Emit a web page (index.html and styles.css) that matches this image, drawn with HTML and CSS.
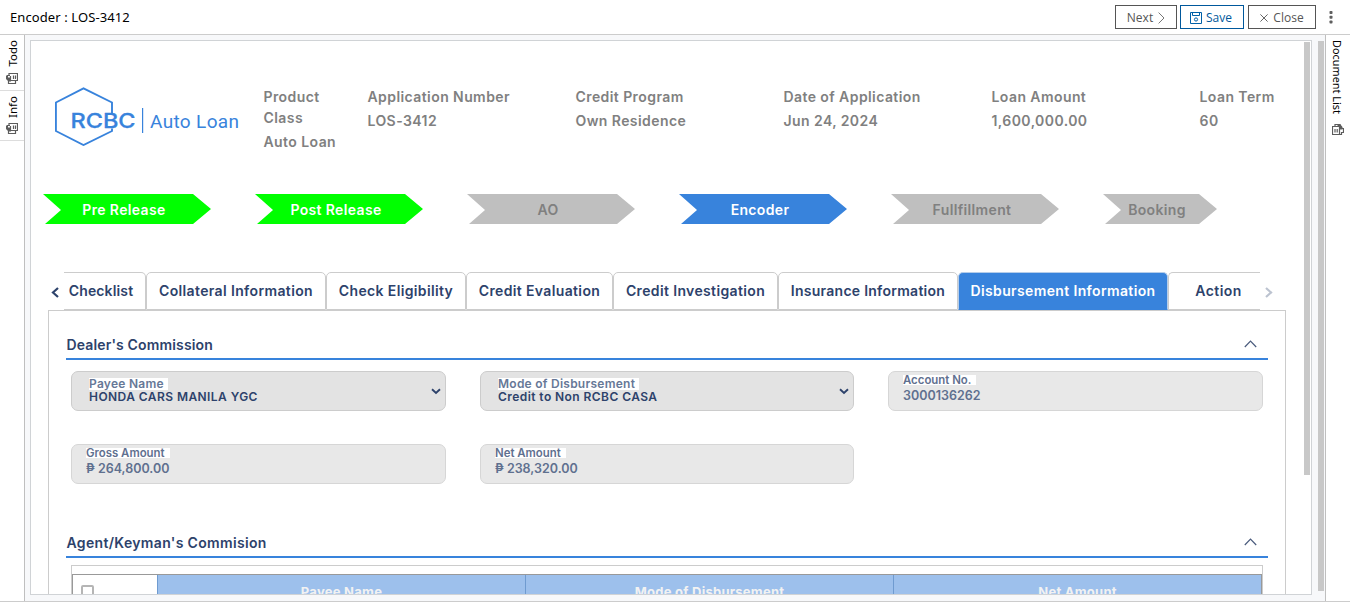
FILE: index.html
```html
<!DOCTYPE html>
<html lang="en">
<head>
<meta charset="utf-8">
<title>Encoder : LOS-3412</title>
<link rel="stylesheet" href="styles.css">
</head>
<body>
<svg class="defs" width="0" height="0">
  <symbol id="docs" viewBox="0 0 12 11"><path d="M4.500 7.500V3M3 2.500V.500H11.500V7.500H10M4 2.500H1M4.500 7.500H9.500V10.500H2.500V8M7.500 2.500V6M9.500 2.500V6" fill="none" stroke="#5c5c5c" stroke-width="1.200"/><path d="M0 2.500H2V4.500H5V8.500H2.500L0 6Z" fill="#5c5c5c"/></symbol>
  <symbol id="up" viewBox="0 0 13 8"><path d="M.8 7L6.500 1L12.200 7" fill="none" stroke="#4a5b7d" stroke-width="1.200"/></symbol>
  <symbol id="down" viewBox="0 0 10 7"><path d="M1 1.300L5 5L9 1.300" fill="none" stroke="#2d426b" stroke-width="1.900"/></symbol>
</svg>
<header class="topbar">
  <h1 class="title">Encoder : LOS-3412</h1>
  <div class="actions">
    <button class="btn next">Next <svg width="7" height="12" viewBox="0 0 7 12"><path d="M.6 .6L6 6L.6 11.400" fill="none" stroke="#666" stroke-width=".9"/></svg></button>
    <button class="btn save"><svg width="12" height="12" viewBox="0 0 12 12"><g fill="none" stroke="#0060a8"><path d="M.5 .5H11.500V11.500H.5Z"/><path d="M2.500 .5V3.500H9.500V.5"/><circle cx="6" cy="7.500" r="1.600"/></g></svg>Save</button>
    <button class="btn close"><svg width="8" height="8" viewBox="0 0 8 8"><path d="M.4 .4L7.600 7.600M7.600 .4L.4 7.600" stroke="#555" stroke-width=".9"/></svg>Close</button>
    <svg class="more" width="4" height="13" viewBox="0 0 4 13" fill="#5f5f5f"><rect x=".5" y="0" width="3" height="3" rx=".8"/><rect x=".5" y="4.700" width="3" height="3" rx=".8"/><rect x=".5" y="9.500" width="3" height="3" rx=".8"/></svg>
  </div>
</header>
<div class="workspace">
  <nav class="rail left">
    <div class="railitem todo"><span>Todo</span><svg width="12" height="11"><use href="#docs"/></svg></div>
    <div class="railitem info"><span>Info</span><svg width="12" height="11"><use href="#docs"/></svg></div>
  </nav>
  <main class="stage">
    <div class="panel">
      <div class="content">
        <section class="summary">
          <svg class="logo" width="185" height="60" viewBox="0 0 185 60">
            <path d="M57 27V16.500L28.500 2.300L.9 16.500V45L28.500 59L57 45V42.500" fill="none" stroke="#3883dc" stroke-width="1.900"/>
            <g fill="#3883dc"><text class="brand" x="15.500" y="42" textLength="65" lengthAdjust="spacingAndGlyphs">RCBC</text>
            <rect x="87" y="22" width="1.200" height="25"/>
            <text class="product" x="95" y="42" textLength="89">Auto Loan</text></g>
          </svg>
          <dl><dt class="narrow">Product Class</dt><dd>Auto Loan</dd></dl>
          <dl><dt>Application Number</dt><dd>LOS-3412</dd></dl>
          <dl><dt>Credit Program</dt><dd>Own Residence</dd></dl>
          <dl><dt>Date of Application</dt><dd>Jun 24, 2024</dd></dl>
          <dl><dt>Loan Amount</dt><dd>1,600,000.00</dd></dl>
          <dl><dt>Loan Term</dt><dd>60</dd></dl>
        </section>
        <ol class="steps">
          <li class="done">Pre Release</li>
          <li class="done">Post Release</li>
          <li>AO</li>
          <li class="current">Encoder</li>
          <li>Fullfillment</li>
          <li class="last">Booking</li>
        </ol>
        <div class="tabrow">
          <svg class="prev" width="8" height="11" viewBox="0 0 8 11"><path d="M7 1L2 5.500L7 10" fill="none" stroke="#2d426b" stroke-width="2.200"/></svg>
          <div class="tabs">
            <div class="tab t1">Checklist</div><div class="tab t2">Collateral Information</div><div class="tab t3">Check Eligibility</div><div class="tab t4">Credit Evaluation</div><div class="tab t5">Credit Investigation</div><div class="tab t6">Insurance Information</div><div class="tab t7 selected">Disbursement Information</div><div class="tab t8">Action</div>
          </div>
          <svg class="following" width="8" height="11" viewBox="0 0 8 11"><path d="M1 1L6 5.500L1 10" fill="none" stroke="#bcc3d0" stroke-width="2.200"/></svg>
        </div>
        <div class="tabbody">
          <h2 class="heading"><span>Dealer's Commission</span><svg width="13" height="8"><use href="#up"/></svg></h2>
          <div class="fields">
            <div class="field select"><label>Payee Name</label><span class="value">HONDA CARS MANILA YGC</span><svg class="caret" width="10" height="7"><use href="#down"/></svg></div>
            <div class="field select"><label>Mode of Disbursement</label><span class="value">Credit to Non RCBC CASA</span><svg class="caret" width="10" height="7"><use href="#down"/></svg></div>
            <div class="field"><label>Account No.</label><span class="value">3000136262</span></div>
            <div class="field"><label>Gross Amount</label><span class="value">₱ 264,800.00</span></div>
            <div class="field"><label>Net Amount</label><span class="value">₱ 238,320.00</span></div>
          </div>
          <h2 class="heading second"><span>Agent/Keyman's Commision</span><svg width="13" height="8"><use href="#up"/></svg></h2>
          <div class="tablewrap"><div class="thead">
            <div class="check"><i></i></div><div class="th">Payee Name</div><div class="th mode">Mode of Disbursement</div><div class="th">Net Amount</div>
          </div></div>
        </div>
      </div>
      <div class="scroll inner"></div>
    </div>
    <div class="scroll outer"></div>
  </main>
  <aside class="rail right"><span>Document List</span><svg width="12" height="11" viewBox="0 0 12 11"><path d="M.5 2.500H7.500V10.500H.5ZM3 2V.5H8V2M8 10.500H9.500V8.500H11.500V4.500H10M3 5V8.500M5.200 5V8.500" fill="none" stroke="#5c5c5c" stroke-width="1.200"/><path d="M5.500 .5H8.500L10.500 3V5.500H7.500V3H5.500Z" fill="#5c5c5c"/></svg></aside>
</div>
</body>
</html>
```
FILE: styles.css
```css
* { box-sizing: border-box; }
body { margin: 0; width: 1350px; height: 602px; overflow: hidden; background: #fff; font-family: Inter, sans-serif; font-size: 14px; }
h1, h2, dl, dt, dd, ol { margin: 0; padding: 0; }
svg { display: block; flex: none; }
.defs { position: absolute; }
.topbar { height: 35px; display: flex; justify-content: space-between; align-items: center; border-bottom: 1px solid #ccc; padding: 0 17px 0 10px; }
.title { font: 400 13px "Noto Sans", sans-serif; color: #000; letter-spacing: .1px; }
.actions { display: flex; align-items: center; }
.btn { height: 24px; padding: 1px 0 0; margin: 0 3px 0 0; display: flex; align-items: center; justify-content: center; background: #fff; border: 1px solid #555; color: #555; font: 12px "Open Sans", sans-serif; gap: 5px; }
.next { width: 62px; }
.save { width: 64px; border-color: #00589c; color: #00589c; gap: 4px; margin-right: 4px; padding-right: 2px; }
.close { width: 68px; gap: 5px; margin-right: 13px; }
.workspace { height: 567px; display: flex; border-bottom: 1px solid #ccc; }
.rail { width: 25px; flex: none; font: 11.500px "Noto Sans", sans-serif; color: #000; }
.left { border-right: 1px solid #bfbfbf; }
.railitem { display: flex; flex-direction: column; align-items: center; border-bottom: 1px solid #ddd; }
.railitem span { writing-mode: vertical-rl; transform: rotate(180deg); line-height: 16px; margin-left: 2px; }
.todo { height: 56px; padding-top: 5px; gap: 6px; }
.info { height: 50px; padding-top: 5px; gap: 5px; }
.right { border-left: 1px solid #bfbfbf; padding-top: 5px; display: flex; flex-direction: column; align-items: center; gap: 10px; font-size: 10.900px; }
.right span { writing-mode: vertical-rl; line-height: 16px; margin-right: 3px; }
.stage { width: 1300px; flex: none; display: flex; background: #f7f8fa; padding: 5px 0 0 5px; }
.panel { width: 1282px; height: 555px; flex: none; display: flex; border: 1px solid #d0d3d6; background: #fff; overflow: hidden; }
.content { width: 1273px; flex: none; }
.scroll { width: 6px; background: #c8c8c8; flex: none; }
.inner { height: 433px; margin-top: 1px; }
.outer { height: 550px; margin: 1px 0 0 6px; }
.summary { height: 153px; padding: 45px 0 0 24px; display: grid; grid-template-columns: 208.500px 104px 208px 208px 208px 208px 80px; color: #808080; font-weight: 600; font-size: 14px; line-height: 21px; letter-spacing: .42px; }
.brand { font: 500 20px Inter, sans-serif; letter-spacing: 0; stroke: #3883dc; stroke-width: .3px; }
.product { font: 400 19px Roboto, sans-serif; letter-spacing: 0; }
.summary dd { margin-top: 3px; }
.narrow { width: 80px; }
.steps { list-style: none; display: flex; gap: 44px; padding-left: 12px; height: 30px; }
.steps li { width: 168px; padding-right: 6px; line-height: 32px; text-align: center; font-weight: 600; letter-spacing: .35px; color: #808080; background: #bfbfbf; clip-path: polygon(0 0, calc(100% - 18px) 0, 100% 15px, calc(100% - 18px) 100%, 2px 100%, 18px 16px); }
.steps .done { background: #0f0; color: #fff; }
.steps .current { background: #3883dc; color: #fff; }
.steps .last { width: 114px; }
.tabrow { margin-top: 48px; height: 38px; display: flex; padding-left: 19px; align-items: flex-start; }
.prev { margin: 15px 7px 0 1px; }
.following { margin: 15px 0 0 5px; }
.tabs { width: 1196px; height: 38px; display: flex; overflow: hidden; flex: none; margin-left: -2px; }
.tab { flex: none; border: 1px solid #ccc; border-radius: 5px 5px 0 0; color: #2d426b; text-align: center; line-height: 36px; font-weight: 600; letter-spacing: .36px; white-space: nowrap; }
.t1 { width: 82px; border-left: 0; border-top-left-radius: 0; padding-right: 7px; letter-spacing: .15px; }
.t2 { width: 180px; }
.t3 { width: 140px; }
.t4 { width: 147px; }
.t5 { width: 165px; }
.t6 { width: 180px; letter-spacing: .26px; }
.t7 { width: 210px; }
.t8 { width: 100px; border-right: 0; letter-spacing: .45px; }
.selected { color: #fff; background: #3883dc; border-color: #b5cdea; border-bottom-color: #3883dc; }
.tabbody { margin-left: 17px; width: 1238px; height: 700px; border: 1px solid #ccc; border-bottom: 0; padding: 20px 17px 0; }
.heading { height: 29px; border-bottom: 2px solid #3883dc; display: flex; justify-content: space-between; align-items: center; padding: 0 11px 0 .5px; color: #2d426b; font-size: 14px; font-weight: 600; letter-spacing: .15px; }
.heading svg { margin-top: -1px; }
.fields { display: grid; grid-template-columns: 375px 374px 375px; column-gap: 34px; row-gap: 33px; padding: 11px 5px 0; }
.field { height: 40px; border: 1px solid #d6d6d6; border-radius: 7px; background: #e8e8e8; display: flex; flex-direction: column; align-items: flex-start; padding: 3px 14px; color: #5f708f; font-weight: 600; font-size: 12.500px; position: relative; }
.field label { background: #fff; font-size: 11.400px; line-height: 10px; padding-right: 5px; }
.field .value { line-height: 22px; }
.select { background: #e3e3e3; border-color: #ccc; padding: 6px 17px; color: #2d426b; font-size: 12px; letter-spacing: .43px; }
.select label { color: #667897; font-size: 12px; line-height: 12px; padding-right: 4px; letter-spacing: .25px; }
.select .value { line-height: 14px; }
.caret { position: absolute; right: 4px; top: 16px; }
.second { margin-top: 45px; letter-spacing: .33px; }
.tablewrap { margin: 7px 5px 0; border: 1px solid #ccc; border-bottom: 0; padding-top: 8px; height: 100px; }
.thead { display: grid; grid-template-columns: 84px 368px 368px 1fr; height: 60px; border: 1px solid #999; }
.th { background: #9dc0ec; border-left: 1px solid #6f9bd0; color: #f2f2f2; text-align: center; font-weight: 700; font-size: 13px; line-height: 34px; letter-spacing: .25px; }
.check i { display: block; width: 13px; height: 13px; border: 2px solid #b5b5b5; border-radius: 2px; margin: 10px 0 0 8px; }
```
